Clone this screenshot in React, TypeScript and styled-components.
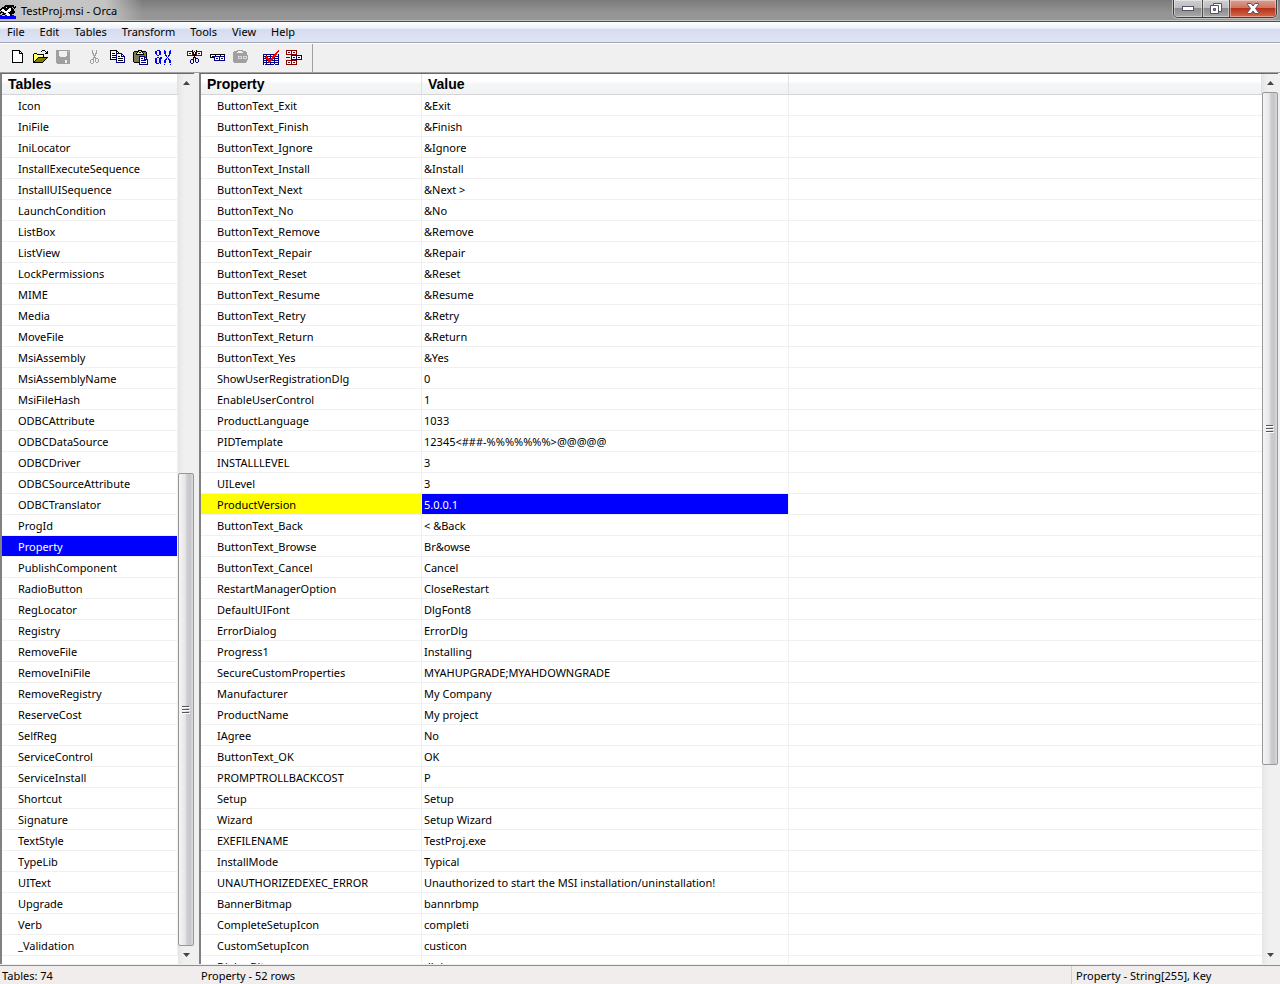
import React from "react";
import styled, { createGlobalStyle } from "styled-components";

const Global = createGlobalStyle`
  * { box-sizing: border-box; }
  body { margin: 0; background: #f0f0f0; color: #000; font: 11px/16px "Noto Sans", sans-serif; }
  button { font: inherit; color: inherit; border: 0; padding: 0; background: none; }
`;

const PALETTE: Record<string, string> = {
  K: "#000000", N: "#000080", B: "#0000ff", R: "#800000", r: "#ff0000",
  O: "#808000", Y: "#ffff66", W: "#ffffff", G: "#a0a0a0", S: "#808060", L: "#d8d8d8",
};

function Pixels({ rows }: { rows: string[] }) {
  const w = Math.max(...rows.map((r) => r.length));
  return (
    <svg width={w} height={rows.length} viewBox={`0 0 ${w} ${rows.length}`} shapeRendering="crispEdges" aria-hidden>
      {rows.flatMap((row, y) => {
        const runs: React.ReactNode[] = [];
        let x = 0;
        while (x < row.length) {
          let end = x + 1;
          while (end < row.length && row[end] === row[x]) end++;
          if (PALETTE[row[x]]) runs.push(<rect key={`${x}-${y}`} x={x} y={y} width={end - x} height={1} fill={PALETTE[row[x]]} />);
          x = end;
        }
        return runs;
      })}
    </svg>
  );
}

const ORCA = [
  ".....KKKKKKKKK..",
  "....KKKKKKKKKK.K",
  "..KKKKWKKKKK.KKK",
  ".KKKKKKKKWWKK.K.",
  "KKWWKKKKWWWKKK..",
  "KWWWWKKWWWWKKK..",
  ".K.WWWWWWWKKKKK.",
  "KKKKWWWWKKKKKKK.",
  "K..KKKWWWKKKKK..",
  "..KKK.WWWWKK....",
  "BB...BBWWWKKBB..",
  "BBBBBBBBBBBBBBBB",
  "BBBBBBBBBBBBBBBB",
  "BBBBBBBBBBBBBBBB",
];
const NEW = [
  "...KKKKKKKK.....",
  "...KWWWWWWKK....",
  "...KWWWWWWKWK...",
  "...KWWWWWWKKKK..",
  ...Array(8).fill("...KWWWWWWWWWK.."),
  "...KKKKKKKKKKK..",
];
const OPEN = [
  "..........KKK....",
  ".........K...K.K.",
  "..............KK.",
  "..KKK........KKK.",
  ".KYWYKKKKKKK.....",
  ".KWYWYWYWYWK.....",
  ".KYWYWYWYWYK.....",
  ".KWYWYKKKKKKKKKK.",
  ".KYWYKOOOOOOOOK..",
  ".KWYKOOOOOOOOK...",
  ".KYKOOOOOOOOK....",
  ".KKOOOOOOOOK.....",
  ".KKKKKKKKKK......",
];
const SAVE = [
  ".GGGGGGGGGGGGGG",
  ".GGG........GLG",
  ".GGG........GGG",
  ".GGG........GGG",
  ".GGG........GGG",
  ".GGG........GGG",
  ".GGGG......GGGG",
  ".GGGGGGGGGGGGGG",
  ".GGGGGGGGGGGGGG",
  ".GGGGGGGGGGGGGG",
  ".GGGGGGGGG..GGG",
  ".GGGGGGGGG..GGG",
  ".GGGGGGGGG..GGG",
  "..GGGGGGGGGGGGG",
];
const CUT = [
  "......G...G.....",
  "......G...G.....",
  "......G...G.....",
  "......GG.GG.....",
  ".......G.G......",
  ".......GGG......",
  "........G.......",
  ".......GGG......",
  ".......G.GGG....",
  ".....GGG.G..G...",
  "....G..G.G..G...",
  "....G..G.G..G...",
  "....G..G..GG....",
  ".....GG.........",
];
const COPY = [
  ".KKKKKKK.........",
  ".KWWWWWKK........",
  ".KWWWWWKWK.......",
  ".KWKKKWNNNNNN....",
  ".KWWWWWNWWWWNN...",
  ".KWKKKKNWWWWNWN..",
  ".KWWWWWNWKKWNNNN.",
  ".KWKKKKNWWWWWWWN.",
  ".KWWWWWNWKKKKKWN.",
  ".KKKKKKNWWWWWWWN.",
  ".......NWKKKKKWN.",
  ".......NWWWWWWWN.",
  ".......NNNNNNNNN.",
];
const PASTE = [
  "......KKKK.......",
  "..KKKKKYYKKKKK...",
  ".KSOSKYKKYKOSOK..",
  ".KOSKYYYYYYKSOK..",
  ".KSOKKKKKKKKOSK..",
  ".KOSOSOSOSOSOSK..",
  ".KSOSOSNNNNNNOK..",
  ".KOSOSONWWWWNNK..",
  ".KSOSOSNWNNWNWN..",
  ".KOSOSONWWWWNNNN.",
  ".KSOSOSNWNNNNNWN.",
  ".KOSOSONWWWWWWWN.",
  "..KKKKKNWNNNNNWN.",
  ".......NWWWWWWWN.",
  ".......NNNNNNNNN.",
];
const FIND = [
  "..BBB....B.....B.",
  "BB..BB...BB...BB.",
  "BB..BB...BB...BB.",
  "BB..BB...BB...BB.",
  ".B..BB....B...B..",
  "..BB......BB.BB..",
  "...........B.B...",
  "..BB.BB.....B....",
  "BB..BBB....B.B...",
  "BB..BB....BB.BB..",
  "BB..BB...BB...BB.",
  "BB..BB...BB...BB.",
  "BB..BB...BB...BB.",
  ".BBB.B...........",
  ".........B.....B.",
];
const CUT_ROW = [
  "......K...K......",
  ".RRRRRK.R.KRRRRR.",
  ".RWWWWKKWKKWWWWR.",
  ".RWRRWRKWKRWRRWR.",
  ".RWWWWRKKKRWWWWR.",
  ".RRRRRRKKKRRRRRR.",
  "........K........",
  ".......NKN.......",
  ".......N.NNN.....",
  ".....NNN.N..N....",
  "....N..N.N..N....",
  "....N..N.N..N....",
  "....N..N..NN.....",
  ".....NN..........",
];
const COPY_ROW = [
  "", "", "", "",
  ".KKKKKKKKKKKKKKK.",
  ".KWWWWKWWWWKWWWK.",
  ".KWKKNNNNNNNNNNN.",
  ".KKKKNWWWWNWWWWN.",
  ".....NWNNWNWNNWN.",
  ".....NWWWWNWWWWN.",
  ".....NNNNNNNNNNN.",
];
const PASTE_ROW = [
  ".....GGGGGG......",
  "..GGGG....GGGG...",
  ".GGGG......GGGG..",
  ".GGGGGGGGGGGGGG..",
  ".GGGGGGGGGGGGGG..",
  ".GGGGGGGGGGGGGGG.",
  ".GGGGGLLLLGLLLLG.",
  ".GGGGGLGGLGLGGLG.",
  ".GGGGGLLLLGLLLLG.",
  ".GGGGGGGGGGGGGGG.",
  ".GGGGGGGGGGGGGG..",
  ".GGGGGGGGGGGGGG..",
  "..GGGGGGGGGGGG...",
];
const VALIDATE = [
  "...............r",
  "..............rr",
  ".............rr.",
  "............rr..",
  "NNNNNNNNNNNrrr.N",
  "NWWNWWWNWWrrrWWN",
  "NNNrNNNNNrrrNNNN",
  "NWrrrWWNWrrNWWWN",
  "NNNrrrNNrrrNNNNN",
  "NWWNrrrrrrWNWWWN",
  "NNNNNrrrrNNNNNNN",
  "NWWNWrrrWWWNWWWN",
  "NNNNNNrNNNNNNNNN",
  "NWWNWWWNWWWNWWWN",
  "N.NNNNNNNNN.NNNN",
];
const TRANSFORM = [
  "RRRRRRRRRRR.....",
  "RWWWWRWWWWR.....",
  "RWRRWRWRRWR.....",
  "RWWWWRWWWWR.....",
  "RRRRRRRRRRR.....",
  ".....NNNNNNNNNNN",
  ".....NWWWWNWWWWN",
  "RRRR.NWNNWNWNNWN",
  ".....NWWWWNWWWWN",
  ".....NNNNNNNNNNN",
  "RRRRRRRRRRR.....",
  "RWWWWRWWWWR.....",
  "RWRRWRWRRWR.....",
  "RWWWWRWWWWR.....",
  "RRRRRRRRRRR.....",
];

const TOOL_GROUPS: { name: string; rows: string[]; disabled?: boolean }[][] = [
  [{ name: "New", rows: NEW }, { name: "Open", rows: OPEN }, { name: "Save", rows: SAVE, disabled: true }],
  [{ name: "Cut", rows: CUT, disabled: true }, { name: "Copy", rows: COPY }, { name: "Paste", rows: PASTE }, { name: "Find", rows: FIND }],
  [{ name: "Cut row", rows: CUT_ROW }, { name: "Copy row", rows: COPY_ROW }, { name: "Paste row", rows: PASTE_ROW, disabled: true }],
  [{ name: "Validate", rows: VALIDATE }, { name: "Transform", rows: TRANSFORM }],
];

const TABLES = "Icon IniFile IniLocator InstallExecuteSequence InstallUISequence LaunchCondition ListBox ListView LockPermissions MIME Media MoveFile MsiAssembly MsiAssemblyName MsiFileHash ODBCAttribute ODBCDataSource ODBCDriver ODBCSourceAttribute ODBCTranslator ProgId Property PublishComponent RadioButton RegLocator Registry RemoveFile RemoveIniFile RemoveRegistry ReserveCost SelfReg ServiceControl ServiceInstall Shortcut Signature TextStyle TypeLib UIText Upgrade Verb _Validation".split(" ");

const PROPERTIES: [string, string][] = [
  ["ButtonText_Exit", "&Exit"],
  ["ButtonText_Finish", "&Finish"],
  ["ButtonText_Ignore", "&Ignore"],
  ["ButtonText_Install", "&Install"],
  ["ButtonText_Next", "&Next >"],
  ["ButtonText_No", "&No"],
  ["ButtonText_Remove", "&Remove"],
  ["ButtonText_Repair", "&Repair"],
  ["ButtonText_Reset", "&Reset"],
  ["ButtonText_Resume", "&Resume"],
  ["ButtonText_Retry", "&Retry"],
  ["ButtonText_Return", "&Return"],
  ["ButtonText_Yes", "&Yes"],
  ["ShowUserRegistrationDlg", "0"],
  ["EnableUserControl", "1"],
  ["ProductLanguage", "1033"],
  ["PIDTemplate", "12345<###-%%%%%%%>@@@@@"],
  ["INSTALLLEVEL", "3"],
  ["UILevel", "3"],
  ["ProductVersion", "5.0.0.1"],
  ["ButtonText_Back", "< &Back"],
  ["ButtonText_Browse", "Br&owse"],
  ["ButtonText_Cancel", "Cancel"],
  ["RestartManagerOption", "CloseRestart"],
  ["DefaultUIFont", "DlgFont8"],
  ["ErrorDialog", "ErrorDlg"],
  ["Progress1", "Installing"],
  ["SecureCustomProperties", "MYAHUPGRADE;MYAHDOWNGRADE"],
  ["Manufacturer", "My Company"],
  ["ProductName", "My project"],
  ["IAgree", "No"],
  ["ButtonText_OK", "OK"],
  ["PROMPTROLLBACKCOST", "P"],
  ["Setup", "Setup"],
  ["Wizard", "Setup Wizard"],
  ["EXEFILENAME", "TestProj.exe"],
  ["InstallMode", "Typical"],
  ["UNAUTHORIZEDEXEC_ERROR", "Unauthorized to start the MSI installation/uninstallation!"],
  ["BannerBitmap", "bannrbmp"],
  ["CompleteSetupIcon", "completi"],
  ["CustomSetupIcon", "custicon"],
  ["DialogBitmap", "dlgbmp"],
];

const Window = styled.div`
  display: flex;
  flex-direction: column;
  height: 100vh;
  overflow: hidden;
`;
const TitleBar = styled.header`
  display: flex;
  flex: none;
  height: 22px;
  background: linear-gradient(#7b7b7b, #949494 60%, #989898);
  border-bottom: 1px solid #4c4c4c;
  box-shadow: inset 0 -1px #c4c4c4;
`;
const Caption = styled.div`
  display: flex;
  align-items: center;
  gap: 5px;
  flex: none;
  width: 150px;
  background: linear-gradient(90deg, #bcbcbc, #c8c8c8 20%, #c4c4c4 70%, #c4c4c400 95%);
  svg { margin-top: 3px; }
`;
const TitleText = styled.h1`
  margin: 0;
  font-size: 11px;
  font-weight: 400;
`;
const CaptionButtons = styled.div`
  display: flex;
  height: 18px;
  margin: 0 3px 0 auto;
  border: 1px solid #3c3c3c;
  border-top: 0;
  border-radius: 0 0 5px 5px;
  overflow: hidden;
  box-shadow: 0 0 0 1px #c0c0c0;
`;
const CaptionButton = styled.button<{ $width: number; $close?: boolean }>`
  display: grid;
  place-items: center;
  width: ${(p) => p.$width}px;
  background: ${(p) => (p.$close
    ? "linear-gradient(#d9a093, #cf7460 45%, #b8311b 50%, #d26a48)"
    : "linear-gradient(#cfcfcf, #bdbdbd 45%, #8c8c8c 50%, #a9a9a9)")};
  box-shadow: inset 0 0 0 1px #ffffff66;
  & + & { border-left: 1px solid #4c4c4c; }
`;
const MenuBar = styled.nav`
  display: flex;
  flex: none;
  gap: 1px;
  height: 21px;
  background: linear-gradient(#fff, #eef2f9 30%, #d5dcef 38%, #dfe4f4 90%);
  border-bottom: 1px solid #a0a5b8;
`;
const MenuItem = styled.button`
  padding: 0 7px;
`;
const ToolBar = styled.div`
  display: flex;
  flex: none;
  height: 30px;
  border-top: 1px solid #fff;
  border-bottom: 1px solid #a0a0a0;
`;
const ToolStrip = styled.div`
  display: flex;
  gap: 8px;
  padding: 0 7px 0 5px;
  border-right: 1px solid #a0a0a0;
`;
const ToolGroup = styled.div`
  display: flex;
`;
const ToolButton = styled.button`
  display: flex;
  align-items: flex-start;
  width: 23px;
  padding: 6px 0 0 4px;
  svg { flex: none; }
`;
const Panes = styled.main`
  display: flex;
  flex: 1;
  min-height: 0;
  gap: 5px;
`;
const Pane = styled.section<{ $side?: boolean }>`
  display: flex;
  flex: ${(p) => (p.$side ? "none" : "1")};
  width: ${(p) => (p.$side ? "194px" : "auto")};
  margin-right: ${(p) => (p.$side ? "0" : "2px")};
  min-width: 0;
  background: #fff;
  border-top: 1px solid #696969;
  border-left: 2px solid #808080;
`;
const Sheet = styled.div`
  flex: 1;
  min-width: 0;
  overflow: hidden;
`;
const Grid = styled.table`
  width: 100%;
  table-layout: fixed;
  border-spacing: 0;
`;
const HeadCell = styled.th<{ $wide?: number }>`
  width: ${(p) => (p.$wide ? `${p.$wide}px` : "auto")};
  height: 21px;
  padding: 0 6px;
  text-align: left;
  font: bold 14px/16px "Liberation Sans", sans-serif;
  background: linear-gradient(#fff 40%, #f5f6f8 45%, #f1f2f4);
  border-bottom: 1px solid #d5d5d5;
  border-right: 1px solid #e0e1e4;
`;
type Tone = "plain" | "key" | "selected";
const TONES: Record<Tone, string> = { plain: "#fff", key: "#ffff00", selected: "#0000ff" };
const Cell = styled.td<{ $indent: number; $tone?: Tone; $ruled?: boolean }>`
  height: 21px;
  padding: 2px 0 0 ${(p) => p.$indent}px;
  white-space: nowrap;
  color: ${(p) => (p.$tone === "selected" ? "#fff" : "#000")};
  background: ${(p) => TONES[p.$tone ?? "plain"]} padding-box;
  border-bottom: 1px solid #f0f0f0;
  border-right: ${(p) => (p.$ruled ? "1px solid #f0f0f0" : "0")};
`;
const ScrollBar = styled.div`
  display: flex;
  flex-direction: column;
  flex: none;
  width: 16px;
  background: linear-gradient(90deg, #e6e6e6, #f0f0f0 40%, #f0f0f0);
`;
const Arrow = styled.button`
  display: grid;
  place-items: center;
  flex: none;
  height: 18px;
`;
const Track = styled.div<{ $before: number; $thumb: number; $after: number }>`
  display: grid;
  flex: 1;
  grid-template-rows: ${(p) => `${p.$before}fr ${p.$thumb}fr ${p.$after}fr`};
`;
const Thumb = styled.div`
  grid-row: 2;
  display: grid;
  place-items: center;
  border: 1px solid #979797;
  border-radius: 2px;
  background: linear-gradient(90deg, #f5f5f5, #e6e6e8 45%, #cfcfd3 55%, #c6c6ca 80%, #dcdcdf);
`;
const StatusBar = styled.footer`
  display: flex;
  flex: none;
  height: 19px;
  margin-top: 1px;
  border-top: 1px solid #8c8c8c;
  background: #f0edec;
  line-height: 20px;
`;
const Status = styled.div<{ $width?: number; $pad: number }>`
  flex: ${(p) => (p.$width ? "none" : "1")};
  width: ${(p) => (p.$width ? `${p.$width}px` : "auto")};
  padding-left: ${(p) => p.$pad}px;
`;
const KeyStatus = styled(Status)`
  border-left: 1px solid #d0d0d0;
`;

function ScrollColumn({ before, thumb, after }: { before: number; thumb: number; after: number }) {
  return (
    <ScrollBar>
      <Arrow aria-label="Scroll up"><svg width="7" height="4"><path d="M0 4 3.500 0 7 4z" fill="#444" /></svg></Arrow>
      <Track $before={before} $thumb={thumb} $after={after}>
        <Thumb>
          <svg width="8" height="9" shapeRendering="crispEdges">
            <path d="M0 1h7M0 4h7M0 7h7" stroke="#555" />
            <path d="M0 2h8M0 5h8M0 8h8" stroke="#fff" />
          </svg>
        </Thumb>
      </Track>
      <Arrow aria-label="Scroll down"><svg width="7" height="4"><path d="M0 0 3.500 4 7 0z" fill="#444" /></svg></Arrow>
    </ScrollBar>
  );
}

export default function App() {
  return (
    <Window>
      <Global />
      <TitleBar>
        <Caption><Pixels rows={ORCA} /><TitleText>TestProj.msi - Orca</TitleText></Caption>
        <CaptionButtons>
          <CaptionButton $width={28} aria-label="Minimize">
            <svg width="12" height="5"><rect x=".5" y=".5" width="11" height="4" fill="#fff" stroke="#53546a" /></svg>
          </CaptionButton>
          <CaptionButton $width={27} aria-label="Restore">
            <svg width="12" height="12" fill="#fff" stroke="#53546a"><path d="M3.500 .5h8v8h-8z" /><path d="M.5 2.500h8v8h-8z" /><path d="M3.500 5.500h2v2h-2z" fill="#888" /></svg>
          </CaptionButton>
          <CaptionButton $width={47} $close aria-label="Close">
            <svg width="12" height="11"><path d="M.5 .5h3.500l2 2.500 2-2.500h3.500v1l-3 4 3 4v1H8L6 8l-2 2.500H.5v-1l3-4-3-4z" fill="#fff" stroke="#53546a" /></svg>
          </CaptionButton>
        </CaptionButtons>
      </TitleBar>
      <MenuBar>
        {["File", "Edit", "Tables", "Transform", "Tools", "View", "Help"].map((m) => <MenuItem key={m}>{m}</MenuItem>)}
      </MenuBar>
      <ToolBar>
        <ToolStrip>
          {TOOL_GROUPS.map((group) => (
            <ToolGroup key={group[0].name}>
              {group.map((t) => (
                <ToolButton key={t.name} aria-label={t.name} disabled={t.disabled}><Pixels rows={t.rows} /></ToolButton>
              ))}
            </ToolGroup>
          ))}
        </ToolStrip>
      </ToolBar>
      <Panes>
        <Pane $side>
          <Sheet>
            <Grid>
              <thead><tr><HeadCell>Tables</HeadCell></tr></thead>
              <tbody>
                {TABLES.map((t) => (
                  <tr key={t}><Cell $indent={16} $ruled $tone={t === "Property" ? "selected" : "plain"}>{t}</Cell></tr>
                ))}
              </tbody>
            </Grid>
          </Sheet>
          <ScrollColumn before={381} thumb={472} after={0} />
        </Pane>
        <Pane>
          <Sheet>
            <Grid>
              <thead><tr><HeadCell $wide={221}>Property</HeadCell><HeadCell $wide={367}>Value</HeadCell><HeadCell aria-label="Empty" /></tr></thead>
              <tbody>
                {PROPERTIES.map(([name, value]) => {
                  const active = name === "ProductVersion";
                  return (
                    <tr key={name}>
                      <Cell $indent={16} $ruled $tone={active ? "key" : "plain"}>{name}</Cell>
                      <Cell $indent={2} $ruled $tone={active ? "selected" : "plain"}>{value}</Cell>
                      <Cell $indent={0} />
                    </tr>
                  );
                })}
              </tbody>
            </Grid>
          </Sheet>
          <ScrollColumn before={0} thumb={672} after={181} />
        </Pane>
      </Panes>
      <StatusBar>
        <Status $width={199} $pad={2}>Tables: 74</Status>
        <Status $pad={2}>Property - 52 rows</Status>
        <KeyStatus $width={209} $pad={4}>Property - String[255], Key</KeyStatus>
      </StatusBar>
    </Window>
  );
}
